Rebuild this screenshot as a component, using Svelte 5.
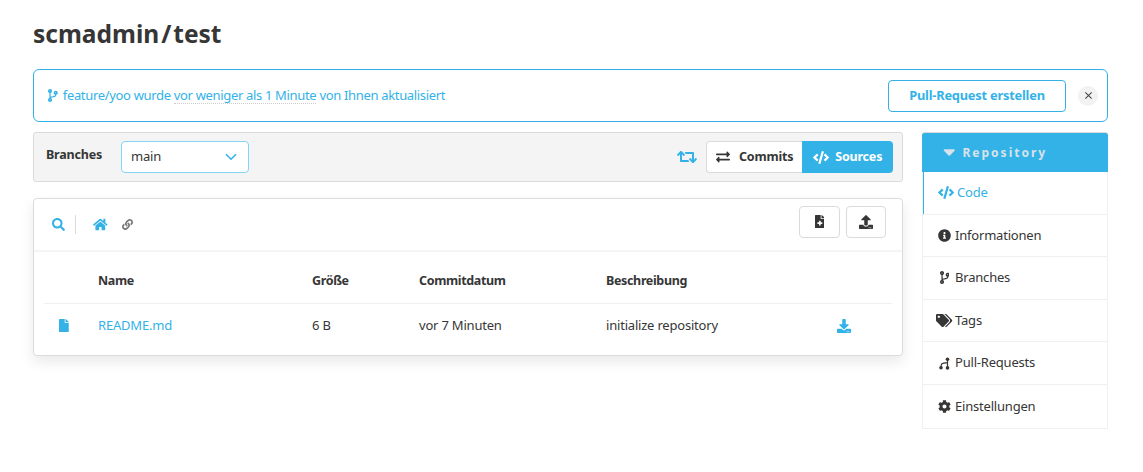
<script>
  const P = {
    branch: [384, "M384 144c0-44.2-35.8-80-80-80s-80 35.8-80 80c0 36.4 24.3 67.1 57.5 76.8-.6 16.1-4.2 28.5-11 36.9-15.4 19.2-49.3 22.4-85.2 25.7-28.2 2.6-57.4 5.4-81.3 16.9v-144c32.5-10.2 56-40.5 56-76.3 0-44.2-35.8-80-80-80S0 35.8 0 80c0 35.8 23.5 66.1 56 76.3v199.3C23.5 365.9 0 396.2 0 432c0 44.2 35.8 80 80 80s80-35.8 80-80c0-34-21.2-63.1-51.2-74.6 3.1-5.2 7.8-9.8 14.9-13.4 16.2-8.2 40.4-10.4 66.1-12.8 42.2-3.9 90-8.4 118.2-43.4 14-17.4 21.1-39.8 21.6-67.9 31.6-10.8 54.4-40.7 54.4-75.9zM80 64c8.8 0 16 7.2 16 16s-7.2 16-16 16-16-7.2-16-16 7.2-16 16-16zm0 384c-8.8 0-16-7.2-16-16s7.2-16 16-16 16 7.2 16 16-7.2 16-16 16zm224-320c8.8 0 16 7.2 16 16s-7.2 16-16 16-16-7.2-16-16 7.2-16 16-16z"],
    code: [640, "M278.9 511.5l-61-17.7c-6.4-1.8-10-8.5-8.2-14.9L346.2 8.7c1.8-6.4 8.5-10 14.9-8.2l61 17.7c6.4 1.8 10 8.5 8.2 14.9L293.8 503.3c-1.9 6.4-8.5 10.1-14.9 8.2zm-114-112.2l43.5-46.4c4.6-4.9 4.3-12.7-.8-17.2L117 256l90.6-79.7c5.1-4.5 5.5-12.3.8-17.2l-43.5-46.4c-4.5-4.8-12.1-5.1-17-.5L3.8 247.2c-5.1 4.7-5.1 12.8 0 17.5l144.1 135.1c4.9 4.6 12.5 4.4 17-.5zm327.2.6l144.1-135.1c5.1-4.7 5.1-12.8 0-17.5L492.1 112.1c-4.8-4.5-12.4-4.3-17 .5L431.6 159c-4.6 4.9-4.3 12.7.8 17.2L523 256l-90.6 79.7c-5.1 4.5-5.5 12.3-.8 17.2l43.5 46.4c4.5 4.9 12.1 5.1 17 .6z"],
    exchange: [512, "M0 168v-16c0-13.255 10.745-24 24-24h360V80c0-21.367 25.899-32.042 40.971-16.971l80 80c9.372 9.373 9.372 24.569 0 33.941l-80 80C409.956 271.982 384 261.456 384 240v-48H24c-13.255 0-24-10.745-24-24zm488 152H128v-48c0-21.314-25.862-32.08-40.971-16.971l-80 80c-9.372 9.373-9.372 24.569 0 33.941l80 80C102.057 463.997 128 453.437 128 432v-48h360c13.255 0 24-10.745 24-24v-16c0-13.255-10.745-24-24-24z"],
    retweet: [640, "M629.657 343.598L528.971 444.284c-9.373 9.372-24.568 9.372-33.941 0L394.343 343.598c-9.373-9.373-9.373-24.569 0-33.941l10.823-10.823c9.562-9.562 25.133-9.34 34.419.492L480 342.118V160H292.451a24.005 24.005 0 0 1-16.971-7.029l-16-16C244.361 121.851 255.069 96 276.451 96H520c13.255 0 24 10.745 24 24v222.118l40.416-42.792c9.285-9.831 24.856-10.054 34.419-.492l10.823 10.823c9.372 9.372 9.372 24.569-.001 33.941zm-265.138 15.431A23.999 23.999 0 0 0 347.548 352H160V169.881l40.416 42.792c9.286 9.832 24.856 10.054 34.419.491l10.822-10.822c9.373-9.373 9.373-24.569 0-33.941L144.971 67.716c-9.373-9.373-24.569-9.373-33.941 0L10.343 168.402c-9.373 9.373-9.373 24.569 0 33.941l10.822 10.822c9.562 9.562 25.133 9.34 34.419-.491L96 169.881V392c0 13.255 10.745 24 24 24h243.549c21.382 0 32.09-25.851 16.971-40.971l-16.001-16z"],
    search: [512, "M505 442.7L405.3 343c-4.5-4.5-10.6-7-17-7H372c27.6-35.3 44-79.7 44-128C416 93.1 322.9 0 208 0S0 93.1 0 208s93.1 208 208 208c48.3 0 92.7-16.4 128-44v16.3c0 6.4 2.5 12.5 7 17l99.7 99.7c9.4 9.4 24.6 9.4 33.9 0l28.3-28.3c9.4-9.4 9.4-24.6.1-34zM208 336c-70.7 0-128-57.2-128-128 0-70.7 57.2-128 128-128 70.7 0 128 57.2 128 128 0 70.7-57.2 128-128 128z"],
    home: [576, "M280.37 148.26L96 300.11V464a16 16 0 0 0 16 16l112.06-.29a16 16 0 0 0 15.92-16V368a16 16 0 0 1 16-16h64a16 16 0 0 1 16 16v95.64a16 16 0 0 0 16 16.05L464 480a16 16 0 0 0 16-16V300L295.67 148.26a12.19 12.19 0 0 0-15.3 0zM571.6 251.47L488 182.56V44.05a12 12 0 0 0-12-12h-56a12 12 0 0 0-12 12v72.61L318.47 43a48 48 0 0 0-61 0L4.34 251.47a12 12 0 0 0-1.6 16.9l25.5 31A12 12 0 0 0 45.15 301l235.22-193.74a12.19 12.19 0 0 1 15.3 0L530.9 301a12 12 0 0 0 16.9-1.6l25.5-31a12 12 0 0 0-1.7-16.93z"],
    link: [512, "M326.612 185.391c59.747 59.809 58.927 155.698.36 214.59-.11.12-.24.25-.36.37l-67.2 67.2c-59.27 59.27-155.699 59.262-214.96 0-59.27-59.26-59.27-155.7 0-214.96l37.106-37.106c9.84-9.84 26.786-3.3 27.294 10.606.648 17.722 3.826 35.527 9.69 52.721 1.986 5.822.567 12.262-3.783 16.612l-13.087 13.087c-28.026 28.026-28.905 73.66-1.155 101.96 28.024 28.579 74.086 28.749 102.325.51l67.2-67.19c28.191-28.191 28.073-73.757 0-101.83-3.701-3.694-7.429-6.564-10.341-8.569a16.037 16.037 0 0 1-6.947-12.606c-.396-10.567 3.348-21.456 11.698-29.806l21.054-21.055c5.521-5.521 14.182-6.199 20.584-1.731a152.482 152.482 0 0 1 20.522 17.197zM467.547 44.449c-59.261-59.262-155.69-59.27-214.96 0l-67.2 67.2c-.12.12-.25.25-.36.37-58.566 58.892-59.387 154.781.36 214.59a152.454 152.454 0 0 0 20.521 17.196c6.402 4.468 15.064 3.789 20.584-1.731l21.054-21.055c8.35-8.35 12.094-19.239 11.698-29.806a16.037 16.037 0 0 0-6.947-12.606c-2.912-2.005-6.64-4.875-10.341-8.569-28.073-28.073-28.191-73.639 0-101.83l67.2-67.19c28.239-28.239 74.3-28.069 102.325.51 27.75 28.3 26.872 73.934-1.155 101.96l-13.087 13.087c-4.35 4.35-5.769 10.79-3.783 16.612 5.864 17.194 9.042 34.999 9.69 52.721.509 13.906 17.454 20.446 27.294 10.606l37.106-37.106c59.271-59.259 59.271-155.699.001-214.959z"],
    file: [384, "M224 136V0H24C10.7 0 0 10.7 0 24v464c0 13.3 10.7 24 24 24h336c13.3 0 24-10.7 24-24V160H248c-13.2 0-24-10.8-24-24zm160-14.1v6.1H256V0h6.1c6.4 0 12.5 2.5 17 7l97.9 98c4.5 4.5 7 10.6 7 16.9z"],
    fileplus: [384, "M377 105L279.1 7c-4.5-4.5-10.6-7-17-7H256v128h128v-6.1c0-6.3-2.5-12.4-7-16.9zm-153 31V0H24C10.7 0 0 10.7 0 24v464c0 13.3 10.7 24 24 24h336c13.3 0 24-10.7 24-24V160H248c-13.2 0-24-10.8-24-24zm64 160v48c0 4.4-3.6 8-8 8h-56v56c0 4.4-3.6 8-8 8h-48c-4.4 0-8-3.6-8-8v-56h-56c-4.4 0-8-3.6-8-8v-48c0-4.4 3.6-8 8-8h56v-56c0-4.4 3.6-8 8-8h48c4.4 0 8 3.6 8 8v56h56c4.4 0 8 3.6 8 8z"],
    upload: [512, "M296 384h-80c-13.3 0-24-10.7-24-24V192h-87.7c-17.8 0-26.7-21.5-14.1-34.1L242.3 5.7c7.5-7.5 19.8-7.5 27.3 0l152.2 152.2c12.6 12.6 3.7 34.1-14.1 34.1H320v168c0 13.3-10.7 24-24 24zm216-8v112c0 13.3-10.7 24-24 24H24c-13.3 0-24-10.7-24-24V376c0-13.3 10.7-24 24-24h136v8c0 30.9 25.1 56 56 56h80c30.9 0 56-25.1 56-56v-8h136c13.3 0 24 10.7 24 24zm-124 88c0-11-9-20-20-20s-20 9-20 20 9 20 20 20 20-9 20-20zm64 0c0-11-9-20-20-20s-20 9-20 20 9 20 20 20 20-9 20-20z"],
    download: [512, "M216 0h80c13.3 0 24 10.7 24 24v168h87.7c17.8 0 26.7 21.5 14.1 34.1L269.7 378.3c-7.5 7.5-19.8 7.5-27.3 0L90.1 226.1c-12.6-12.6-3.7-34.1 14.1-34.1H192V24c0-13.3 10.7-24 24-24zm296 376v112c0 13.3-10.7 24-24 24H24c-13.3 0-24-10.7-24-24V376c0-13.3 10.7-24 24-24h146.7l49 49c20.1 20.1 52.5 20.1 72.6 0l49-49H488c13.3 0 24 10.7 24 24zm-124 88c0-11-9-20-20-20s-20 9-20 20 9 20 20 20 20-9 20-20zm64 0c0-11-9-20-20-20s-20 9-20 20 9 20 20 20 20-9 20-20z"],
    info: [512, "M256 8C119.043 8 8 119.083 8 256c0 136.997 111.043 248 248 248s248-111.003 248-248C504 119.083 392.957 8 256 8zm0 110c23.196 0 42 18.804 42 42s-18.804 42-42 42-42-18.804-42-42 18.804-42 42-42zm56 254c0 6.627-5.373 12-12 12h-88c-6.627 0-12-5.373-12-12v-24c0-6.627 5.373-12 12-12h12v-64h-12c-6.627 0-12-5.373-12-12v-24c0-6.627 5.373-12 12-12h64c6.627 0 12 5.373 12 12v100h12c6.627 0 12 5.373 12 12v24z"],
    tags: [640, "M497.941 225.941L286.059 14.059A48 48 0 0 0 252.118 0H48C21.49 0 0 21.49 0 48v204.118a48 48 0 0 0 14.059 33.941l211.882 211.882c18.744 18.745 49.136 18.746 67.882 0l204.118-204.118c18.745-18.745 18.745-49.137 0-67.882zM112 160c-26.51 0-48-21.49-48-48s21.49-48 48-48 48 21.49 48 48-21.49 48-48 48zm513.941 133.823L421.823 497.941c-18.745 18.745-49.137 18.745-67.882 0l-.36-.36L527.64 323.522c16.999-16.999 26.36-39.6 26.36-63.64s-9.362-46.641-26.36-63.64L331.397 0h48.721a48 48 0 0 1 33.941 14.059l211.882 211.882c18.745 18.745 18.745 49.137 0 67.882z"],
    cog: [512, "M487.4 315.7l-42.6-24.6c4.3-23.2 4.3-47 0-70.2l42.6-24.6c4.9-2.8 7.1-8.6 5.5-14-11.1-35.6-30-67.8-54.7-94.6-3.8-4.1-10-5.1-14.8-2.3L380.8 110c-17.9-15.4-38.5-27.3-60.8-35.1V25.8c0-5.6-3.9-10.5-9.4-11.7-36.7-8.2-74.3-7.8-109.2 0-5.5 1.2-9.4 6.1-9.4 11.7V75c-22.2 7.9-42.8 19.8-60.8 35.1L88.7 85.5c-4.9-2.8-11-1.9-14.8 2.3-24.7 26.7-43.6 58.9-54.7 94.6-1.7 5.4.6 11.2 5.5 14L67.3 221c-4.3 23.2-4.3 47 0 70.2l-42.6 24.6c-4.9 2.8-7.1 8.6-5.5 14 11.1 35.6 30 67.8 54.7 94.6 3.8 4.1 10 5.1 14.8 2.3l42.6-24.6c17.9 15.4 38.5 27.3 60.8 35.1v49.2c0 5.6 3.9 10.5 9.4 11.7 36.7 8.2 74.3 7.8 109.2 0 5.5-1.2 9.4-6.1 9.4-11.7v-49.2c22.2-7.9 42.8-19.8 60.8-35.1l42.6 24.6c4.9 2.8 11 1.9 14.8-2.3 24.7-26.7 43.6-58.9 54.7-94.6 1.5-5.5-.7-11.3-5.6-14.1zM256 336c-44.1 0-80-35.9-80-80s35.9-80 80-80 80 35.9 80 80-35.9 80-80 80z"],
    down: [320, "M41 288h238c21.4 0 32.1 25.9 17 41L177 448c-9.4 9.4-24.6 9.4-33.9 0L24 329c-15.1-15.1-4.4-41 17-41z"]
  };
  const nav = [
    { label: "Code", icon: "code", active: true },
    { label: "Informationen", icon: "info" },
    { label: "Branches", icon: "branch" },
    { label: "Tags", icon: "tags" },
    { label: "Pull-Requests", icon: "pr" },
    { label: "Einstellungen", icon: "cog" }
  ];
</script>

{#snippet fa(name, size, cls = "")}
  <svg class="fa {cls}" height={size} width={size * P[name][0] / 512} viewBox="0 0 {P[name][0]} 512" aria-hidden="true"><path d={P[name][1]} fill="currentColor" /></svg>
{/snippet}

<div class="page">
  <h1>scmadmin<span class="sl">/</span>test</h1>

  <div class="alert">
    <div class="msg">
      {@render fa("branch", 13)}
      <span>feature/yoo wurde <span class="dotted">vor weniger als 1 Minute</span> von Ihnen aktualisiert</span>
    </div>
    <button class="outline">Pull-Request erstellen</button>
    <button class="close" aria-label="Schließen"><span></span></button>
  </div>

  <div class="cols">
    <main>
      <div class="bar">
        <strong class="lbl">Branches</strong>
        <div class="select"><span>main</span>
          <svg width="12" height="8" viewBox="0 0 12 8"><path d="M1 1.2l5 5 5-5" fill="none" stroke="#33b2e8" stroke-width="1.6"/></svg>
        </div>
        <div class="right">
          <span class="switch">{@render fa("retweet", 16)}</span>
          <div class="group">
            <button class="seg">{@render fa("exchange", 14)}<b>Commits</b></button>
            <button class="seg on">{@render fa("code", 13)}<b>Sources</b></button>
          </div>
        </div>
      </div>

      <section class="card">
        <div class="crumbs">
          <span class="search">{@render fa("search", 13)}</span>
          <span class="home">{@render fa("home", 13)}</span>
          <span class="chain">{@render fa("link", 11)}</span>
          <div class="actions">
            <button class="icon">{@render fa("fileplus", 13)}</button>
            <button class="icon up">{@render fa("upload", 14)}</button>
          </div>
        </div>
        <div class="table">
          <div class="row head">
            <span></span><span>Name</span><span>Größe</span><span>Commitdatum</span><span>Beschreibung</span><span></span>
          </div>
          <div class="row body">
            <span class="blue">{@render fa("file", 13)}</span>
            <span class="blue">README.md</span>
            <span>6 B</span>
            <span>vor 7 Minuten</span>
            <span>initialize repository</span>
            <span class="blue">{@render fa("download", 14)}</span>
          </div>
        </div>
      </section>
    </main>

    <aside>
      <div class="side-head">{@render fa("down", 20, "caret")}<span>Repository</span></div>
      <ul>
        {#each nav as n}
          <li class:active={n.active}>
            <span class="ico">
              {#if n.icon === "pr"}
                <svg width="11" height="13" viewBox="0 0 11 13" class="fa"><g fill="currentColor"><circle cx="2" cy="10.700" r="1.800"/><circle cx="8.500" cy="2.300" r="1.800"/><circle cx="8.500" cy="10.900" r="1.800"/></g><path d="M8.500 3v7M2 10C2 7 2.500 6 8 5.600" fill="none" stroke="currentColor" stroke-width="1.200"/></svg>
              {:else}
                {@render fa(n.icon, 13)}
              {/if}
            </span>
            <span>{n.label}</span>
          </li>
        {/each}
      </ul>
    </aside>
  </div>
</div>

<style>
  :global(body) { margin: 0; background: #fff; }
  .page { padding: 0 35px 0 33px; font: 13px/1.5 "Noto Sans", sans-serif; letter-spacing: -.2px; color: #363636; height: 472px; box-sizing: border-box; overflow: hidden; }
  button { font: inherit; letter-spacing: inherit; background: #fff; cursor: pointer; }
  .fa { display: block; flex: none; }
  h1 { margin: 0; padding-top: 15px; height: 69px; box-sizing: border-box; font-size: 24.500px; line-height: 37px; font-weight: 700; letter-spacing: 0; color: #363636; }
  .sl { margin: 0 2px; }
  .alert { display: flex; align-items: center; height: 53px; box-sizing: border-box; border: 1px solid #33b2e8; border-radius: 6px; padding: 0 9px 0 14px; color: #33b2e8; }
  .msg { flex: 1; display: flex; align-items: center; gap: 5px; letter-spacing: -.33px; }
  .dotted { display: inline-block; line-height: 16px; border-bottom: 1px dotted #ccc; }
  .outline { width: 178px; height: 32px; border: 1px solid #33b2e8; border-radius: 4px; color: #33b2e8; font-weight: 700; padding: 0; font-size: 12.800px; }
  .close { width: 20px; height: 20px; margin-left: 12px; border: 0; border-radius: 50%; background: #f2f2f2; position: relative; padding: 0; }
  .close span::before, .close span::after { content: ""; position: absolute; left: 5.500px; top: 9.500px; width: 9px; height: 1px; background: #444; transform: rotate(45deg); }
  .close span::after { transform: rotate(-45deg); }
  .cols { display: flex; gap: 19px; margin-top: 10px; }
  main { flex: 0 0 870px; }
  .bar { display: flex; align-items: center; height: 50px; box-sizing: border-box; background: #f4f4f4; border: 1px solid #dbdbdb; border-radius: 3px; padding: 0 9px 0 12px; }
  .lbl { flex: 0 0 75px; font-weight: 700; margin-top: -4px; font-size: 12.500px; }
  .select { display: flex; justify-content: space-between; align-items: center; width: 128px; height: 32px; box-sizing: border-box; padding: 0 11px 0 9px; background: #fff; border: 1px solid #85d4f5; border-radius: 4px; }
  .right { margin-left: auto; display: flex; align-items: center; gap: 9px; }
  .switch { color: #33b2e8; }
  .group { display: flex; height: 32px; }
  .seg { display: flex; align-items: center; gap: 9px; height: 32px; box-sizing: border-box; padding: 0 9px; border: 1px solid #dbdbdb; border-right: 0; border-radius: 4px 0 0 4px; color: #363636; width: 96px; font-size: 12.500px; }
  .seg.on { background: #33b2e8; border: 0; color: #fff; border-radius: 0 4px 4px 0; width: 91px; gap: 6px; padding: 0 11px; }
  .card { margin-top: 16px; height: 158px; box-sizing: border-box; border: 1px solid #dbdbdb; border-radius: 4px; box-shadow: 0 6px 14px rgba(10, 10, 10, .09); background: #fff; }
  .crumbs { display: flex; align-items: center; height: 53px; box-sizing: border-box; border-bottom: 2px solid #f5f5f5; padding: 0 16px 0 18px; }
  .search { color: #33b2e8; padding-right: 10px; border-right: 1px solid #dbdbdb; height: 19px; display: flex; align-items: center; }
  .home { color: #33b2e8; margin-left: 17px; }
  .chain { color: #777; margin-left: 14px; }
  .actions { margin-left: auto; display: flex; gap: 6px; margin-top: -6px; }
  .icon { width: 41px; height: 32px; border: 1px solid #dbdbdb; border-radius: 4px; display: flex; align-items: center; justify-content: center; color: #363636; padding: 0; }
  .icon.up { width: 40px; }
  .table { padding: 0 10px; }
  .row { display: grid; grid-template-columns: 54px 214px 107px 187px 231px 1fr; align-items: center; height: 51px; }
  .head { height: 52px; font-weight: 700; font-size: 12.500px; letter-spacing: -.35px; border-bottom: 1px solid #f0f0f0; padding-top: 7px; box-sizing: border-box; }
  .body { padding-bottom: 8px; box-sizing: border-box; }
  .row > span:first-child { padding-left: 15px; }
  .blue { color: #33b2e8; }
  aside { flex: 0 0 186px; }
  .side-head { display: flex; align-items: center; gap: 7px; height: 40px; box-sizing: border-box; padding: 0 0 0 21px; background: #33b2e8; border-top: 1px solid #dbdbdb; border-radius: 3px 3px 0 0; color: #d8e2e8; font-weight: 700; font-size: 12px; letter-spacing: 2px; }
  .caret { margin-top: -9px; }
  ul { list-style: none; margin: 0; padding: 0; border: 1px solid #f0f0f0; border-top: 0; }
  li { display: flex; align-items: center; gap: 4px; height: 42.600px; box-sizing: border-box; padding-left: 15px; border-bottom: 1px solid #f0f0f0; }
  li:last-child { border-bottom: 0; }
  li.active { color: #33b2e8; box-shadow: inset 1px 0 0 #33b2e8; gap: 3px; }
  li.active .ico { width: 16px; }
  .ico { width: 13px; display: flex; justify-content: center; }
</style>
